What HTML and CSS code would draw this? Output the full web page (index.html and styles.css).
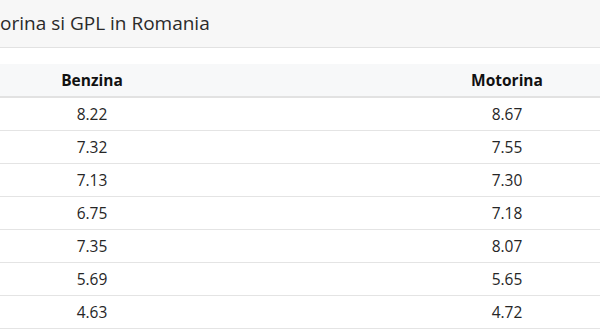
FILE: index.html
```html
<!DOCTYPE html>
<html lang="ro">
<head>
<meta charset="utf-8">
<title>Preturi carburanti</title>
<link rel="stylesheet" href="styles.css">
</head>
<body>
<div class="card">
  <div class="card-header"><h2 class="title">orina si GPL in Romania</h2></div>
  <div class="card-body">
    <table class="prices">
      <thead>
        <tr><th class="c1">Benzina</th><th class="c2">Motorina</th></tr>
      </thead>
      <tbody>
        <tr><td class="c1">8.22</td><td class="c2">8.67</td></tr>
        <tr><td class="c1">7.32</td><td class="c2">7.55</td></tr>
        <tr><td class="c1">7.13</td><td class="c2">7.30</td></tr>
        <tr><td class="c1">6.75</td><td class="c2">7.18</td></tr>
        <tr><td class="c1">7.35</td><td class="c2">8.07</td></tr>
        <tr><td class="c1">5.69</td><td class="c2">5.65</td></tr>
        <tr><td class="c1">4.63</td><td class="c2">4.72</td></tr>
      </tbody>
    </table>
  </div>
</div>
</body>
</html>
```
FILE: styles.css
```css
* { box-sizing: border-box; }
html, body { margin: 0; padding: 0; background: #fff; }
body {
  font-family: "Open Sans", "Noto Sans", sans-serif;
  color: #212529;
  overflow: hidden;
}
.card-header {
  height: 48px;
  background: #f7f7f7;
  border-bottom: 1px solid #e2e2e2;
  display: flex;
  align-items: center;
}
.title {
  margin: 0;
  font-size: 19px;
  font-weight: 400;
  color: #2a2a2a;
  padding-bottom: 2px;
}
.card-body { padding-top: 16px; }
.prices {
  width: 100%;
  border-collapse: collapse;
  font-size: 15.5px;
}
.prices th, .prices td {
  height: 33px;
  padding: 0;
  text-align: center;
  border-bottom: 1px solid #e4e4e4;
}
.prices thead tr { background: #f7f8f9; }
.prices th {
  font-weight: 700;
  color: #111;
  border-bottom: 2px solid #e2e2e2;
}
.prices td { color: #262626; }
.prices .c1 { width: 184px; }
.prices .c2 { padding-left: 230px; }
```
